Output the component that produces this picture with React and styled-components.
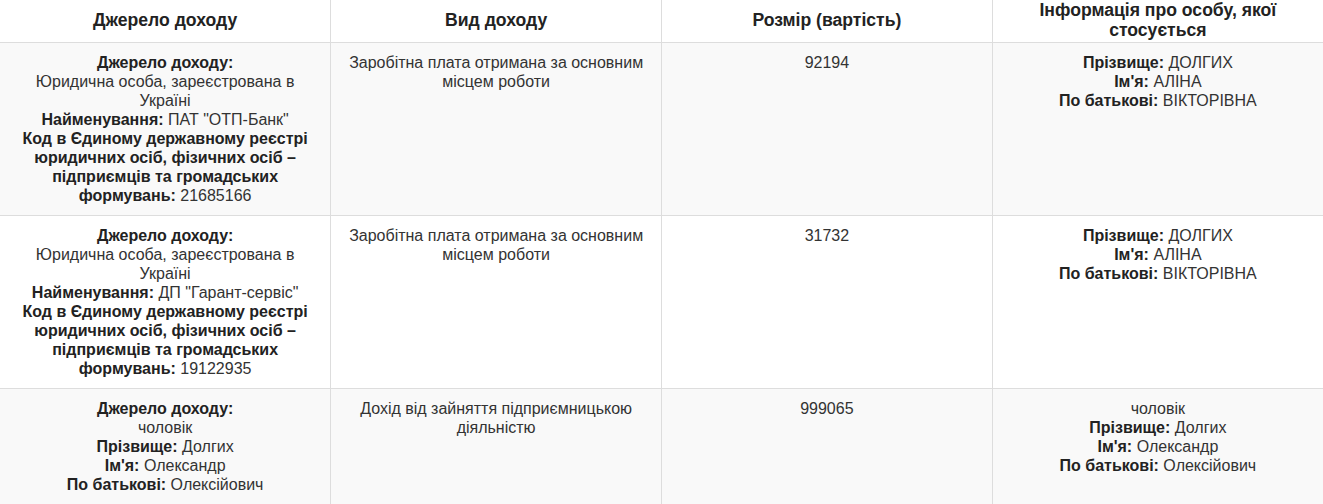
import React from "react";
import styled, { createGlobalStyle } from "styled-components";

const Global = createGlobalStyle`
  html, body { margin: 0; padding: 0; background: #fff; }
  body { font-family: "Liberation Sans", Arial, sans-serif; color: #333; }
`;

const Table = styled.table`
  width: 1323px;
  table-layout: fixed;
  border-collapse: collapse;
  border-spacing: 0;
`;

const HeadCell = styled.th`
  font-size: 17.6px;
  font-weight: bold;
  line-height: 20px;
  color: #222;
  text-align: center;
  vertical-align: middle;
  height: 40px;
  padding: 0 12px 2px;
  border-bottom: 1px solid #ddd;
  & + & { border-left: 1px solid #ddd; }
`;

const Row = styled.tr`
  background: ${(p) => (p.$striped ? "#f9f9f9" : "#fff")};
`;

const Cell = styled.td`
  font-size: 16px;
  line-height: 19px;
  color: #333;
  text-align: center;
  vertical-align: top;
  padding: 10px 12px;
  border-top: 1px solid #ddd;
  & + & { border-left: 1px solid #ddd; }
`;

const Line = styled.div``;

const Label = styled.b`
  color: #222;
  font-weight: bold;
`;

const Field = ({ label, children }) => (
  <Line>
    <Label>{label}:</Label> {children}
  </Line>
);

const legal = (name, code) => (
  <>
    <Line><Label>Джерело доходу:</Label></Line>
    <Line>Юридична особа, зареєстрована в Україні</Line>
    <Field label="Найменування">{name}</Field>
    <Field label="Код в Єдиному державному реєстрі юридичних осіб, фізичних осіб – підприємців та громадських формувань">{code}</Field>
  </>
);

const upperPerson = (
  <>
    <Field label="Прізвище">ДОЛГИХ</Field>
    <Field label="Ім'я">АЛІНА</Field>
    <Field label="По батькові">ВІКТОРІВНА</Field>
  </>
);

const husband = (
  <>
    <Line>чоловік</Line>
    <Field label="Прізвище">Долгих</Field>
    <Field label="Ім'я">Олександр</Field>
    <Field label="По батькові">Олексійович</Field>
  </>
);

const rows = [
  {
    source: legal('ПАТ "ОТП-Банк"', "21685166"),
    kind: "Заробітна плата отримана за основним місцем роботи",
    amount: "92194",
    person: upperPerson,
  },
  {
    source: legal('ДП "Гарант-сервіс"', "19122935"),
    kind: "Заробітна плата отримана за основним місцем роботи",
    amount: "31732",
    person: upperPerson,
  },
  {
    source: (
      <>
        <Line><Label>Джерело доходу:</Label></Line>
        {husband}
      </>
    ),
    kind: "Дохід від зайняття підприємницькою діяльністю",
    amount: "999065",
    person: husband,
  },
];

export default function App() {
  return (
    <>
      <Global />
      <Table>
        <thead>
          <tr>
            <HeadCell>Джерело доходу</HeadCell>
            <HeadCell>Вид доходу</HeadCell>
            <HeadCell>Розмір (вартість)</HeadCell>
            <HeadCell>Інформація про особу, якої стосується</HeadCell>
          </tr>
        </thead>
        <tbody>
          {rows.map((r, i) => (
            <Row key={i} $striped={i % 2 === 0}>
              <Cell>{r.source}</Cell>
              <Cell>{r.kind}</Cell>
              <Cell>{r.amount}</Cell>
              <Cell>{r.person}</Cell>
            </Row>
          ))}
        </tbody>
      </Table>
    </>
  );
}
